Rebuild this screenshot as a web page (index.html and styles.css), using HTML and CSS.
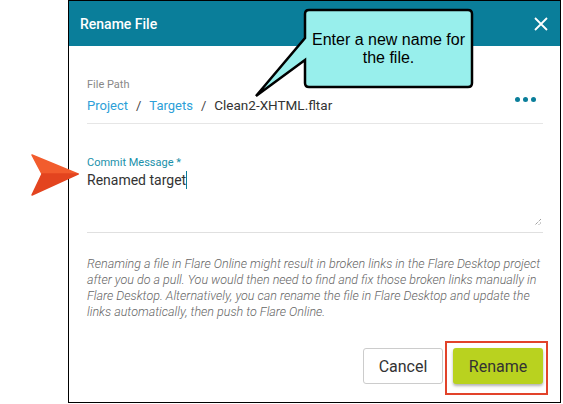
FILE: index.html
```html
<!DOCTYPE html>
<html>
<head>
	<title>Rename File</title>
	<meta charset="utf-8">
	<link rel="stylesheet" href="styles.css">
</head>
<body>
<div class="stage">
	<div class="dialog">
		<div class="dialog-head">
			<h1>Rename File</h1>
			<span class="close">
				<svg width="14" height="14" viewBox="0 0 14 14"><path d="M1 1L13 13M13 1L1 13" stroke="#fff" stroke-width="1.8"/></svg>
			</span>
		</div>
		<div class="dialog-body">
			<div class="path-block">
				<div class="label">File Path</div>
				<div class="path-row">
					<div class="crumbs">
						<a>Project</a><span class="sep">/</span><a>Targets</a><span class="sep">/</span><span class="file">Clean2-XHTML.fltar</span>
					</div>
					<span class="more"><i></i><i></i><i></i></span>
				</div>
			</div>
			<div class="commit">
				<div class="label label-teal">Commit Message *</div>
				<div class="textarea">
					<span>Renamed target</span><span class="caret"></span>
					<svg class="grip" width="8" height="8" viewBox="0 0 8 8"><path d="M7 1L1 7M7 4.5L4.5 7" stroke="#777" stroke-width="1" stroke-dasharray="1 1"/></svg>
				</div>
			</div>
			<p class="note">Renaming a file in Flare Online might result in broken links in the Flare Desktop project after you do a pull. You would then need to find and fix those broken links manually in Flare Desktop. Alternatively, you can rename the file in Flare Desktop and update the links automatically, then push to Flare Online.</p>
			<div class="actions">
				<button class="btn btn-cancel">Cancel</button>
				<button class="btn btn-rename">Rename</button>
			</div>
		</div>
	</div>

	<!-- callout -->
	<svg class="callout-shape" width="230" height="100" viewBox="250 5 230 100">
		<path d="M309,10 H468 Q472,10 472,14 V83 Q472,87 468,87 H309 Q305,87 305,83 V60 L256,96 L305,38 V14 Q305,10 309,10 Z" fill="#98efec" stroke="#000" stroke-width="2.5" stroke-linejoin="miter"/>
	</svg>
	<div class="callout-text">Enter a new name for<br>the file.</div>

	<!-- orange pointer -->
	<svg class="pointer" width="52" height="44" viewBox="28 153 52 44">
		<path d="M32,155 L78,174 L42,174 Z" fill="#f25c2d" stroke="#f25c2d" stroke-width="1.5" stroke-linejoin="round"/>
		<path d="M42,174 L78,174 L32,195 Z" fill="#e3441f" stroke="#e3441f" stroke-width="1.5" stroke-linejoin="round"/>
	</svg>

	<div class="highlight"></div>
</div>
</body>
</html>
```

FILE: styles.css
```css
*{
	margin: 0;
	padding: 0;
	box-sizing: border-box;
}
body{
	background: #fff;
	font-family: Roboto, "Liberation Sans", sans-serif;
	overflow: hidden;
}
.stage{
	position: relative;
	width: 563px;
	height: 404px;
}
.dialog{
	margin-left: 68px;
	width: 493px;
	height: 403px;
	border: 1px solid #000;
	display: flex;
	flex-direction: column;
}
.dialog-head{
	height: 45px;
	background: #0a7e9a;
	display: flex;
	align-items: center;
	justify-content: space-between;
	padding: 0 12px 0 11px;
}
.dialog-head h1{
	font-size: 14px;
	font-weight: 500;
	color: #fff;
}
.close{
	display: flex;
}
.dialog-body{
	padding: 32px 17px 0 18px;
	display: flex;
	flex-direction: column;
}
.label{
	font-size: 11px;
	line-height: 13px;
	color: #888;
}
.label-teal{
	color: #1a90aa;
}
.path-block{
	border-bottom: 1px solid #e6e6e6;
	padding-bottom: 8px;
}
.path-row{
	display: flex;
	justify-content: space-between;
	margin-top: 4px;
}
.crumbs{
	font-size: 13px;
	line-height: 20px;
	height: 20px;
	color: #333;
	white-space: nowrap;
}
.crumbs a{
	color: #2d9fd8;
}
.crumbs .file{
	font-size: 13.5px;
}
.sep{
	margin: 0 8px;
	color: #444;
}
.more{
	display: flex;
	gap: 3px;
	margin: 2px 7px 0 0;
}
.more i{
	width: 5px;
	height: 5px;
	border-radius: 50%;
	background: #0a7e9a;
}
.commit{
	margin-top: 32px;
}
.textarea{
	position: relative;
	height: 64px;
	border-bottom: 1px solid #e0e0e0;
	font-size: 14px;
	line-height: 20px;
	color: #333;
	padding-top: 1px;
}
.caret{
	display: inline-block;
	width: 1px;
	height: 18px;
	background: #0a7e9a;
	vertical-align: -4px;
}
.grip{
	position: absolute;
	right: 1px;
	bottom: 6px;
}
.note{
	margin-top: 23px;
	font-size: 12.5px;
	line-height: 16px;
	font-style: italic;
	font-weight: 300;
	color: #666;
}
.actions{
	display: flex;
	justify-content: flex-end;
	gap: 10px;
	margin-top: 28px;
}
.btn{
	font-family: Roboto, "Liberation Sans", sans-serif;
	font-size: 16px;
	height: 36px;
	border-radius: 3px;
	color: #333;
	cursor: pointer;
}
.btn-cancel{
	width: 80px;
	background: #fff;
	border: 1px solid #ccc;
}
.btn-rename{
	width: 90px;
	background: #b9d21f;
	border: none;
	box-shadow: 0 2px 3px rgba(0,0,0,0.3);
}
.callout-shape{
	position: absolute;
	left: 250px;
	top: 5px;
}
.callout-text{
	position: absolute;
	left: 305px;
	top: 31px;
	width: 167px;
	font-family: "Liberation Sans", Arial, sans-serif;
	font-size: 16px;
	line-height: 18px;
	text-align: center;
	color: #000;
}
.pointer{
	position: absolute;
	left: 28px;
	top: 153px;
}
.highlight{
	position: absolute;
	left: 445px;
	top: 341px;
	width: 103px;
	height: 54px;
	border: 2px solid #e2432a;
}
```
